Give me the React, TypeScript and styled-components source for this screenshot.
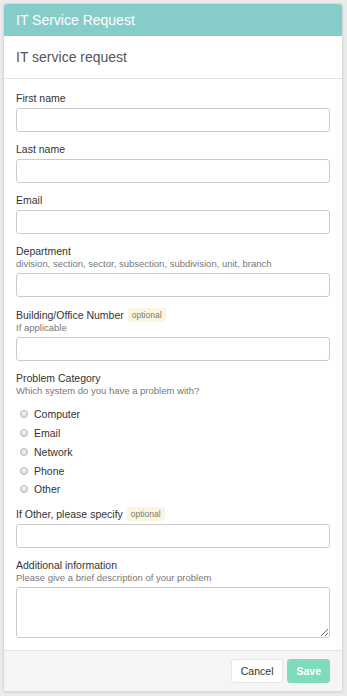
import styled, { createGlobalStyle } from "styled-components";

const GlobalStyle = createGlobalStyle`
  html, body {
    margin: 0;
    padding: 0;
    background: #ebebeb;
  }
  body {
    font-family: "Liberation Sans", Arial, sans-serif;
    color: #333;
  }
`;

const Page = styled.div`
  padding: 3px 4px 6px 3px;
`;

const Panel = styled.div`
  background: #fff;
  border: 1px solid #d9d9d9;
  border-radius: 4px;
  box-shadow: 0 1px 3px rgba(0, 0, 0, 0.08);
  overflow: hidden;
`;

const PanelHeader = styled.div`
  height: 32px;
  line-height: 32px;
  padding: 0 12px;
  background: #86cdca;
  color: #fff;
  font-size: 14px;
`;

const TitleBar = styled.div`
  height: 42px;
  line-height: 42px;
  padding: 0 12px;
  font-size: 14px;
  color: #555;
  border-bottom: 1px solid #e5e5e5;
`;

const FormBody = styled.div`
  padding: 13px 12px 12px;
  display: flex;
  flex-direction: column;
  gap: 11.5px;
`;

const Field = styled.div`
  display: flex;
  flex-direction: column;
`;

const LabelRow = styled.div`
  display: flex;
  align-items: center;
  gap: 4px;
  font-size: 10.5px;
  line-height: 13px;
  color: #333;
`;

const Badge = styled.span`
  background: #fcf6e0;
  color: #7a7a6a;
  font-size: 8.5px;
  line-height: 14px;
  padding: 0 4px;
  border-radius: 2px;
`;

const Hint = styled.div`
  font-size: 9.5px;
  line-height: 12px;
  color: #777;
`;

const Input = styled.input`
  box-sizing: border-box;
  margin-top: 2.5px;
  width: 100%;
  height: 24px;
  border: 1px solid #ccc;
  border-radius: 3px;
  background: #fff;
  font: inherit;
  outline: none;
`;

const TextArea = styled.textarea`
  box-sizing: border-box;
  margin-top: 2.5px;
  width: 100%;
  height: 51px;
  border: 1px solid #ccc;
  border-radius: 3px;
  background: #fff;
  font: inherit;
  outline: none;
  display: block;
`;

const RadioList = styled.div`
  display: flex;
  flex-direction: column;
  padding: 8px 0 0 4px;
  margin-bottom: -3px;
`;

const RadioRow = styled.label`
  display: flex;
  align-items: center;
  gap: 6px;
  height: 18.75px;
  font-size: 10.5px;
  color: #333;
`;

const RadioDot = styled.span`
  width: 6px;
  height: 6px;
  border-radius: 50%;
  border: 1px solid #b8b8b8;
  background: radial-gradient(circle at 50% 35%, #f4f4f4, #d6d6d6);
`;

const Footer = styled.div`
  display: flex;
  justify-content: flex-end;
  gap: 4px;
  padding: 8px 12px;
  background: #f5f5f5;
  border-top: 1px solid #e3e3e3;
`;

const Button = styled.button<{ $primary?: boolean }>`
  height: 24px;
  padding: 0 ${(p) => (p.$primary ? "8px" : "9px")};
  border-radius: 3px;
  border: 1px solid ${(p) => (p.$primary ? "#7edbbd" : "#e6e6e6")};
  background: ${(p) => (p.$primary ? "#7edbbd" : "#fff")};
  color: ${(p) => (p.$primary ? "#fff" : "#333")};
  font-family: "Liberation Sans", Arial, sans-serif;
  font-size: 10.5px;
  font-weight: ${(p) => (p.$primary ? "bold" : "normal")};
`;

const categories = ["Computer", "Email", "Network", "Phone", "Other"];

function App() {
    return (
        <Page>
            <GlobalStyle />
            <Panel>
                <PanelHeader>IT Service Request</PanelHeader>
                <TitleBar>IT service request</TitleBar>
                <FormBody>
                    <Field>
                        <LabelRow>First name</LabelRow>
                        <Input />
                    </Field>
                    <Field>
                        <LabelRow>Last name</LabelRow>
                        <Input />
                    </Field>
                    <Field>
                        <LabelRow>Email</LabelRow>
                        <Input />
                    </Field>
                    <Field>
                        <LabelRow>Department</LabelRow>
                        <Hint>division, section, sector, subsection, subdivision, unit, branch</Hint>
                        <Input />
                    </Field>
                    <Field>
                        <LabelRow>
                            Building/Office Number
                            <Badge>optional</Badge>
                        </LabelRow>
                        <Hint>If applicable</Hint>
                        <Input />
                    </Field>
                    <Field>
                        <LabelRow>Problem Category</LabelRow>
                        <Hint>Which system do you have a problem with?</Hint>
                        <RadioList>
                            {categories.map((c) => (
                                <RadioRow key={c}>
                                    <RadioDot />
                                    {c}
                                </RadioRow>
                            ))}
                        </RadioList>
                    </Field>
                    <Field>
                        <LabelRow>
                            If Other, please specify
                            <Badge>optional</Badge>
                        </LabelRow>
                        <Input />
                    </Field>
                    <Field>
                        <LabelRow>Additional information</LabelRow>
                        <Hint>Please give a brief description of your problem</Hint>
                        <TextArea />
                    </Field>
                </FormBody>
                <Footer>
                    <Button>Cancel</Button>
                    <Button $primary>Save</Button>
                </Footer>
            </Panel>
        </Page>
    );
}

export default App;
